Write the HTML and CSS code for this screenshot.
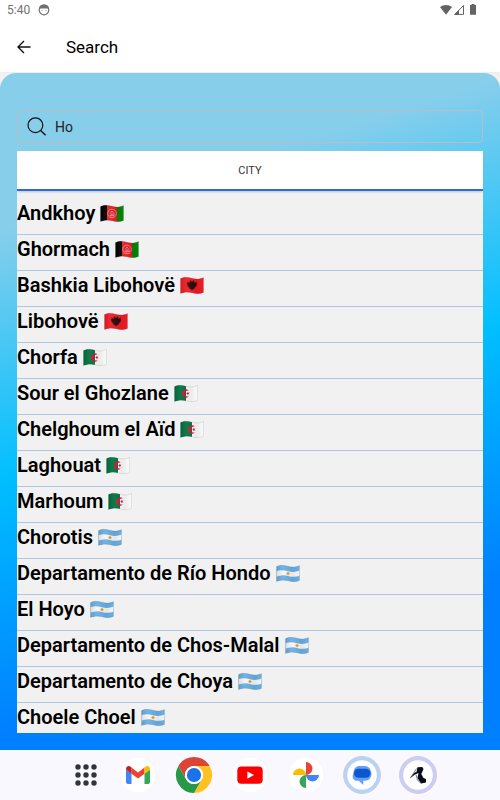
FILE: index.html
```html
<!DOCTYPE html>
<html lang="en">
<head>
<meta charset="utf-8">
<meta name="viewport" content="width=device-width, initial-scale=1">
<title>Search</title>
<link rel="stylesheet" href="styles.css">
</head>
<body>
<svg class="defs" aria-hidden="true">
  <defs>
    <clipPath id="wave"><path d="M.5 2.6C4 .8 7.500 1 12 2.200S20 3 23.500 1.400V16.400C20 18 16.500 18 12 16.800S4 16.200.5 17.600Z"/></clipPath>
    <linearGradient id="shade"><stop offset="0" stop-color="#000" stop-opacity=".12"/><stop offset=".3" stop-color="#fff" stop-opacity=".06"/><stop offset=".7" stop-color="#000" stop-opacity=".06"/><stop offset="1" stop-color="#000" stop-opacity="0"/></linearGradient>
    <path id="wave-edge" d="M.5 2.600C4 .8 7.500 1 12 2.200S20 3 23.500 1.400V16.400C20 18 16.500 18 12 16.800S4 16.200.5 17.600Z" fill="url(#shade)" stroke="#000" stroke-opacity=".15" stroke-width=".6"/>
  </defs>
  <symbol id="flag-af" viewBox="0 0 24 19">
    <g clip-path="url(#wave)"><path fill="#000" d="M0 0h7v19H0z"/><path fill="#e32026" d="M7 0h10v19H7z"/><path fill="#078207" d="M17 0h7v19h-7z"/></g>
    <g fill="none" stroke="#f08c8c" stroke-width=".8"><circle cx="12" cy="9.500" r="4.300"/><path d="M9.500 11.500h5M10 9.500l2-2.500 2 2.500v2M11 12v-2h2v2M9.800 13.200h4.400"/></g>
    <use href="#wave-edge"/>
  </symbol>
  <symbol id="flag-al" viewBox="0 0 24 19">
    <g clip-path="url(#wave)"><path fill="#ed1b24" d="M0 0h24v19H0z"/></g>
    <path fill="#2a0707" d="m12 6-1.300-1.600-1.400.7.700 1-.5.900L7.400 5.400l.2 1.800-.9-.1.800 1.400-.7.500 1.300.7-.6.900 1.500.1-.4 1.200 1.300-.4-.6 1.700 1.300-.5L12 14.600l1.400-1.900 1.300.5-.6-1.700 1.300.4-.4-1.200 1.500-.1-.6-.9 1.300-.7-.7-.5.800-1.400-.9.100.2-1.800L14.500 7l-.5-.9.700-1-1.400-.7Z"/>
    <use href="#wave-edge"/>
  </symbol>
  <symbol id="flag-dz" viewBox="0 0 24 19">
    <g clip-path="url(#wave)"><path fill="#00713f" d="M0 0h12v19H0z"/><path fill="#fafafa" d="M12 0h12v19H12z"/></g>
    <path fill="#d21034" d="M14.800 6.600a4 4 0 1 0 0 5.800 3.100 3.100 0 1 1 0-5.800Z"/>
    <path fill="#d21034" d="m12 9.500 1.300-.5V7.800l.8 1 1.300-.4-.8 1.100.8 1.100-1.300-.4-.8 1V10Z"/>
    <use href="#wave-edge"/>
  </symbol>
  <symbol id="flag-ar" viewBox="0 0 24 19">
    <g clip-path="url(#wave)"><path fill="#69aee3" d="M0 0h24v19H0z"/><path fill="#f5f5f5" d="M0 7.300C4 5.800 7.500 6 12 7.200s8 .8 12-.9v5.300c-4 1.700-8 1.500-12 .3S4 11.200 0 12.700Z"/></g>
    <circle cx="12" cy="9.600" r="1.400" fill="#f2a222"/><path d="M12 7.900v3.400M10.300 9.600h3.400" stroke="#e8961b" stroke-width=".5"/>
    <use href="#wave-edge"/>
  </symbol>
</svg>

<div class="status">
  <span>5:40</span>
  <svg class="status-face" viewBox="0 0 12 12" aria-hidden="true"><circle cx="6" cy="6" r="4.800" fill="none" stroke="#707070" stroke-width="1.200"/><path d="M1 5C1 2 3 .6 6 .6S11 2 11 5L9 4.500H3Z" fill="#707070"/><circle cx="4" cy="6.300" r=".5" fill="#707070"/><circle cx="8" cy="6.300" r=".5" fill="#707070"/></svg>
  <svg class="status-icons" viewBox="0 0 38 12" aria-hidden="true"><path fill="#636363" d="M0 3C3.500.2 8.500.2 12 3L6 10.800Z"/><path d="M23.500 1.500v8.900h-8.700Z" fill="none" stroke="#636363"/><path d="M14 10.800 19 5.800v5Z" fill="#636363"/><path fill="#636363" d="M31.500 0h3v1H36v9.800h-6V1h1.500Z"/></svg>
</div>

<header class="bar">
  <button class="back" type="button" aria-label="Back"><svg viewBox="0 0 16 16" aria-hidden="true"><path d="M14.500 8H2M8 2 2 8l6 6" fill="none" stroke="#111" stroke-width="1.400"/></svg></button>
  <h1>Search</h1>
</header>

<main class="screen">
  <div class="panel">
    <label class="search">
      <svg viewBox="0 0 20 20" aria-hidden="true"><circle cx="8.400" cy="8.200" r="7.400" fill="none" stroke="#111" stroke-width="1.200"/><path d="m13.600 13.400 5 4.800" stroke="#111" stroke-width="1.400"/></svg>
      <input type="text" value="Ho" aria-label="Search">
    </label>
    <button class="tab" type="button">CITY</button>
    <ul class="cities">
      <li>Andkhoy <svg><use href="#flag-af"/></svg></li>
      <li>Ghormach <svg><use href="#flag-af"/></svg></li>
      <li>Bashkia Libohovë <svg><use href="#flag-al"/></svg></li>
      <li>Libohovë <svg><use href="#flag-al"/></svg></li>
      <li>Chorfa <svg><use href="#flag-dz"/></svg></li>
      <li>Sour el Ghozlane <svg><use href="#flag-dz"/></svg></li>
      <li>Chelghoum el Aïd <svg><use href="#flag-dz"/></svg></li>
      <li>Laghouat <svg><use href="#flag-dz"/></svg></li>
      <li>Marhoum <svg><use href="#flag-dz"/></svg></li>
      <li>Chorotis <svg><use href="#flag-ar"/></svg></li>
      <li>Departamento de Río Hondo <svg><use href="#flag-ar"/></svg></li>
      <li>El Hoyo <svg><use href="#flag-ar"/></svg></li>
      <li>Departamento de Chos-Malal <svg><use href="#flag-ar"/></svg></li>
      <li>Departamento de Choya <svg><use href="#flag-ar"/></svg></li>
      <li>Choele Choel <svg><use href="#flag-ar"/></svg></li>
    </ul>
  </div>
</main>

<nav class="dock" aria-label="Apps">
  <button class="all-apps" type="button" aria-label="All apps"><svg viewBox="0 0 40 40"><g fill="#31333f"><circle cx="12" cy="12" r="2.700"/><circle cx="20" cy="12" r="2.700"/><circle cx="28" cy="12" r="2.700"/><circle cx="12" cy="20" r="2.700"/><circle cx="20" cy="20" r="2.700"/><circle cx="28" cy="20" r="2.700"/><circle cx="12" cy="28" r="2.700"/><circle cx="20" cy="28" r="2.700"/><circle cx="28" cy="28" r="2.700"/></g></svg></button>
  <button type="button" aria-label="Gmail"><svg viewBox="0 0 40 40"><circle cx="20" cy="20" r="18" fill="#fff" stroke="#f3f1f6" stroke-width=".6"/><path fill="#4285f4" d="M8 14.500l5.500 4V29H10a2 2 0 0 1-2-2Z"/><path fill="#34a853" d="M32 14.500l-5.500 4V29H30a2 2 0 0 0 2-2Z"/><path fill="#ea4335" d="M13.500 12.500 20 17.400l6.500-4.900v6.200L20 23.600l-6.500-4.900Z"/><path fill="#c5221f" d="M8 14c0-2.800 2.800-3.800 4.700-2.200l.8.700v6.200L8 14.600Z"/><path fill="#fbbc04" d="M32 14c0-2.800-2.800-3.800-4.700-2.200l-.8.700v6.200l5.500-4.100Z"/></svg></button>
  <button type="button" aria-label="Chrome"><svg viewBox="0 0 40 40"><circle cx="20" cy="20" r="18" fill="#fff"/><path fill="#db4437" d="M4.400 11A18 18 0 0 1 35.600 11H20a9 9 0 0 0-7.800 13.500Z"/><path fill="#ffc221" d="M35.600 11A18 18 0 0 1 20 38l7.800-13.500A9 9 0 0 0 20 11Z"/><path fill="#279847" d="M20 38A18 18 0 0 1 4.400 11l7.800 13.500a9 9 0 0 0 15.600 0Z"/><circle cx="20" cy="20" r="9" fill="#fff"/><circle cx="20" cy="20" r="7.100" fill="#1a73e8"/></svg></button>
  <button type="button" aria-label="YouTube"><svg viewBox="0 0 40 40"><circle cx="20" cy="20" r="18" fill="#fff" stroke="#f3f1f6" stroke-width=".6"/><rect x="7.300" y="11.500" width="25.400" height="17.200" rx="4" fill="#f00"/><path fill="#fff" d="m17.400 16.400 6.600 3.700-6.600 3.700Z"/></svg></button>
  <button type="button" aria-label="Photos"><svg viewBox="0 0 40 40"><circle cx="20" cy="20" r="18" fill="#fff" stroke="#f3f1f6" stroke-width=".6"/><path fill="#ea4335" d="M20 7a6.500 6.500 0 0 1 0 13Z"/><path fill="#4285f4" d="M33 20a6.500 6.500 0 0 1-13 0Z"/><path fill="#34a853" d="M20 33a6.500 6.500 0 0 1 0-13Z"/><path fill="#fbbc04" d="M7 20a6.500 6.500 0 0 1 13 0Z"/></svg></button>
  <button type="button" aria-label="Messages"><svg viewBox="0 0 40 40"><circle cx="20" cy="20" r="18.500" fill="#b5d3f8" stroke="#d0d0da"/><circle cx="20" cy="20" r="14.800" fill="#fff"/><path fill="#669df6" d="M17.500 11h5.300a6.500 6.500 0 0 1 5.900 4.500c2.300 5.700-.9 10.300-6 10.300H21.300V30l-4.600-4.200h-1.500c-3.500 0-5.200-3-4.400-5.800L12 14.800a6 6 0 0 1 5.500-3.800Z"/><rect x="12" y="13.800" width="16.400" height="9" rx="4.500" fill="#0b57d0"/></svg></button>
  <button type="button" aria-label="Design app"><svg viewBox="0 0 40 40"><circle cx="20" cy="20" r="18.500" fill="#cbcdf7" stroke="#d0d0da"/><circle cx="20" cy="20" r="14.800" fill="#fff"/><path fill="#090b18" d="m19.500 12.300 4.800-.2 1.200 2-2.200 5 2.200 3.800 2.500 1v3.500l-5 1.200-3.500-5.500 1-5-3.500 1.500-4.300 3.200-.5-.6 4.500-4.700 1.800-.5Z"/><path d="m18.500 13.500-5.500 9m5-3 1.500 5.500 3.500 3.500" stroke="#555866" stroke-width=".8" fill="none"/></svg></button>
</nav>
</body>
</html>
```
FILE: styles.css
```css
* {
  box-sizing: border-box;
}

body {
  margin: 0;
  height: 100vh;
  display: flex;
  flex-direction: column;
  background: #fff;
  color: #000;
  font-family: Roboto, "Liberation Sans", sans-serif;
}

button {
  padding: 0;
  border: 0;
  background: none;
  font: inherit;
  color: inherit;
}

svg {
  display: block;
}

.defs {
  position: absolute;
  width: 0;
  height: 0;
}

.status {
  display: flex;
  align-items: center;
  gap: 8px;
  height: 20px;
  padding: 0 22px 0 7px;
  font-size: 12px;
  color: #707070;
}

.status-face {
  width: 12px;
  height: 12px;
}

.status-icons {
  width: 38px;
  height: 12px;
  margin-left: auto;
}

.bar {
  display: flex;
  align-items: center;
  gap: 34px;
  height: 53px;
  padding: 0 16px;
}

.back svg {
  width: 16px;
  height: 16px;
}

.bar h1 {
  margin: 0;
  font-size: 17px;
  font-weight: 400;
  line-height: 20px;
}

.screen {
  flex: 1;
  min-height: 0;
  display: flex;
  background: #f1f1f1;
  box-shadow: 0 -1px 1px #0001;
}

.panel {
  flex: 1;
  min-width: 0;
  display: flex;
  flex-direction: column;
  padding: 37px 17px 17px;
  border-radius: 16px 16px 0 0;
  background: linear-gradient(163deg, #87ceeb 19%, #00bfff 49%, #007fff 80%);
}

.search {
  display: flex;
  align-items: center;
  gap: 8px;
  height: 33px;
  margin-bottom: 8px;
  padding: 0 9px;
  border: 1px solid #b8bec4;
  border-radius: 4px;
}

.search svg {
  width: 20px;
  height: 20px;
}

.search input {
  flex: 1;
  min-width: 0;
  padding: 0;
  border: 0;
  outline: 0;
  background: none;
  font: 14px Roboto, "Liberation Sans", sans-serif;
  color: #222;
}

.tab {
  position: relative;
  height: 40px;
  flex: none;
  border-bottom: 2px solid #2c66ea;
  background: #fff;
  box-shadow: 0 2px 2px -1px #0003;
  font-size: 11px;
  color: #333;
}

.cities {
  flex: 1;
  min-height: 0;
  overflow: hidden;
  margin: 0;
  padding: 8px 0 0;
  list-style: none;
  background: #f1f1f1;
}

.cities li {
  display: flex;
  gap: 5px;
  height: 36px;
  padding-top: 2px;
  border-bottom: 1px solid #b0c4e4;
  font-size: 20px;
  font-weight: 600;
  line-height: 24px;
}

.cities svg {
  width: 24px;
  height: 19px;
  margin-top: 3px;
}

.dock {
  display: flex;
  align-items: center;
  justify-content: center;
  gap: 16px;
  height: 50px;
  padding-left: 4px;
  background: #faf8ff;
}

.dock svg {
  width: 40px;
  height: 40px;
}

.all-apps {
  margin-right: -4px;
}
```
